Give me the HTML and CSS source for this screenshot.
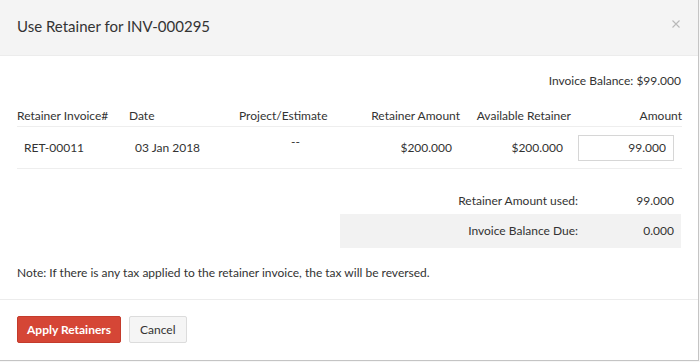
FILE: index.html
```html
<!DOCTYPE html>
<html lang="en">
<head>
  <meta charset="UTF-8" />
  <title>Use Retainer</title>
  <link rel="stylesheet" href="styles.css">
</head>
<body>
  <div class="modal">
    <div class="modal-header">
      <h4>Use Retainer for INV-000295</h4>
      <svg class="close" width="8" height="8" viewBox="0 0 8 8" aria-label="Close">
        <path d="M0.5 0.5 L7.5 7.5 M7.5 0.5 L0.5 7.5" stroke="#b9b9b9" stroke-width="1.1" fill="none" />
      </svg>
    </div>
    <div class="modal-body">
      <div class="balance">Invoice Balance: $99.000</div>
      <table class="retainers">
        <thead>
          <tr>
            <th class="col-inv">Retainer Invoice#</th>
            <th class="col-date">Date</th>
            <th class="col-proj">Project/Estimate</th>
            <th class="col-amt right">Retainer Amount</th>
            <th class="col-avail right">Available Retainer</th>
            <th class="col-use right">Amount</th>
          </tr>
        </thead>
        <tbody>
          <tr>
            <td class="cell-inv">RET-00011</td>
            <td class="cell-date">03 Jan 2018</td>
            <td class="cell-proj"><span class="empty">--</span></td>
            <td class="cell-amt right">$200.000</td>
            <td class="cell-avail right">$200.000</td>
            <td class="cell-use"><input type="text" class="amount-input" value="99.000" /></td>
          </tr>
        </tbody>
      </table>
      <div class="summary">
        <div class="summary-row">
          <span class="summary-label">Retainer Amount used:</span>
          <span class="summary-value">99.000</span>
        </div>
        <div class="summary-row due">
          <span class="summary-label">Invoice Balance Due:</span>
          <span class="summary-value">0.000</span>
        </div>
      </div>
      <p class="note">Note: If there is any tax applied to the retainer invoice, the tax will be reversed.</p>
    </div>
    <div class="modal-footer">
      <button class="btn btn-primary">Apply Retainers</button>
      <button class="btn btn-default">Cancel</button>
    </div>
  </div>
</body>
</html>
```

FILE: styles.css
```css
body {
  margin: 0;
  font-family: Lato, 'Open Sans', sans-serif;
  font-size: 12px;
  line-height: 16px;
  color: #333;
  background: #f7f7f7;
}
.modal {
  width: 699px;
  height: 361px;
  background: white;
  border-right: 1px solid #c4c4c4;
  border-bottom: 1px solid #c4c4c4;
  box-sizing: border-box;
  display: flex;
  flex-direction: column;
}
.modal-header {
  background: #f4f4f4;
  height: 56px;
  flex-shrink: 0;
  box-sizing: border-box;
  border-bottom: 1px solid #ececec;
  display: flex;
  align-items: center;
  justify-content: space-between;
  padding: 0 18px 3px 17px;
}
.modal-header h4 {
  margin: 0;
  font-size: 15px;
  font-weight: 400;
  color: #333;
}
.close {
  margin-right: 0;
  margin-top: -4px;
}
.modal-body {
  padding: 17px 17px 0 17px;
  flex: 1;
}
.balance {
  text-align: right;
  margin-bottom: 19px;
}
.retainers {
  width: 100%;
  border-collapse: collapse;
  table-layout: fixed;
}
.retainers th {
  font-weight: 400;
  text-align: left;
  padding: 0 0 2px 0;
  border-bottom: 1px solid #eee;
}
.retainers td {
  padding: 0;
  height: 41px;
  border-bottom: 1px solid #eee;
}
.right {
  text-align: right !important;
}
.col-inv { width: 112px; }
.col-date { width: 110px; }
.col-proj { width: 96px; }
.col-amt { width: 125px; }
.col-avail { width: 111px; }
.col-use { width: 111px; }
.cell-inv { padding-left: 7px !important; }
.cell-date { padding-left: 6px !important; }
.cell-proj { padding-left: 52px !important; }
.empty {
  display: inline-block;
  margin-bottom: 12px;
}
.cell-amt { padding-right: 8px !important; }
.cell-avail { padding-right: 8px !important; }
.amount-input {
  display: block;
  width: 96px;
  height: 26px;
  box-sizing: border-box;
  border: 1px solid #d6d6d6;
  font-family: inherit;
  font-size: 12px;
  color: #333;
  text-align: right;
  padding: 0 7px;
  margin: 0 8px 0 auto;
}
.summary {
  margin-top: 19px;
  display: flex;
  flex-direction: column;
  align-items: flex-end;
}
.summary-row {
  width: 341px;
  height: 26px;
  display: flex;
  align-items: center;
  justify-content: flex-end;
  padding-right: 7px;
  box-sizing: border-box;
}
.summary-row.due {
  background: #f2f2f2;
  height: 34px;
}
.summary-value {
  width: 96px;
  text-align: right;
}
.note {
  margin: 17px 0 0 0;
}
.modal-footer {
  border-top: 1px solid #ececec;
  padding: 16px 17px 0 17px;
  height: 61px;
  flex-shrink: 0;
  box-sizing: border-box;
  display: flex;
  gap: 8px;
  align-items: flex-start;
}
.btn {
  font-family: inherit;
  font-size: 12px;
  height: 27px;
  padding: 0 9px;
  border-radius: 2px;
  cursor: pointer;
}
.btn-primary {
  background: #d54636;
  border: 1px solid #c43b2c;
  color: white;
  font-weight: 700;
}
.btn-default {
  background: #f5f5f5;
  border: 1px solid #dcdcdc;
  color: #333;
  padding: 0 10px;
}
```
